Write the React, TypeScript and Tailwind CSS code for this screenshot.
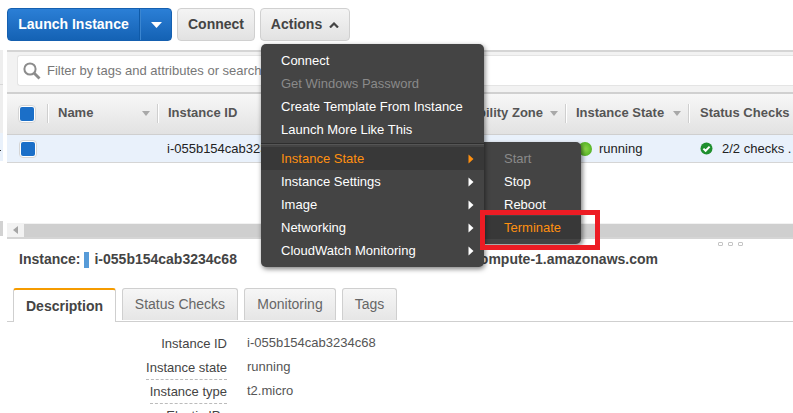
import React from "react";

const Caret = ({ className = "" }: { className?: string }) => (
  <svg width="8" height="5" viewBox="0 0 8 5" className={`shrink-0 ${className}`}><path d="M0 0h8L4 5z" fill="#a8a8a8" /></svg>
);

const Arrow = ({ color = "#fff" }: { color?: string }) => (
  <svg width="6" height="10" viewBox="0 0 6 10" className="shrink-0"><path d="M0.5 0.5L5.5 5L0.5 9.5z" fill={color} /></svg>
);

const Check = () => (
  <div className="flex h-[18px] w-[18px] items-center justify-center rounded-[4px] border border-[#d5d5d5] bg-white">
    <div className="h-[14px] w-[14px] rounded-[2px] bg-[#1b6fc8]" />
  </div>
);

const Sep = () => <div className="h-[19px] w-[2px] shrink-0 border-l border-[#cfcfcf] bg-white" />;

const HeadCol = ({ label, w, pad = "pl-[9px]", caret = true }: { label: string; w: string; pad?: string; caret?: boolean }) => (
  <div className={`flex shrink-0 items-center ${w}`}>
    <Sep />
    <div className={`flex flex-1 items-center justify-between pr-[7px] ${pad}`}>
      <span className="whitespace-nowrap">{label}</span>
      {caret && <Caret />}
    </div>
  </div>
);

const Item = ({ label, tone = "white", arrow, active, className = "" }: { label: string; tone?: "white" | "dim" | "orange"; arrow?: string; active?: boolean; className?: string }) => (
  <div className={`flex h-[23px] items-center justify-between pr-[10px] ${active ? "bg-[#383838]" : ""} ${tone === "white" ? "text-white" : tone === "dim" ? "text-[#8a8a8a]" : "text-[#ff9010]"} ${className}`}>
    <span className="whitespace-nowrap">{label}</span>
    {arrow && <Arrow color={arrow} />}
  </div>
);

const Tab = ({ label, w }: { label: string; w: string }) => (
  <div className={`mb-px flex h-[32px] items-center justify-center rounded-t-[3px] border border-b-0 border-[#cfcfcf] bg-gradient-to-b from-[#f6f6f6] to-[#e6e6e6] text-[#666] ${w}`}>
    {label}
  </div>
);

const Row = ({ label, value, dashed }: { label: string; value: string; dashed?: boolean }) => (
  <div className="flex h-[24px]">
    <div className="flex w-[220px] justify-end">
      <span className={`h-[22px] leading-[20px] text-[#444] ${dashed ? "border-b border-dashed border-[#bbb]" : ""}`}>{label}</span>
    </div>
    <span className="ml-[20px] leading-[18px] text-[#555]">{value}</span>
  </div>
);

export default function App() {
  return (
    <div className="relative flex h-[413px] w-[793px] overflow-hidden bg-white font-['Liberation_Sans',Arial,sans-serif] text-[13px] text-[#333]">
      {/* left sliver */}
      <div className="flex w-[7px] shrink-0 flex-col">
        <div className="h-[50px]" />
        <div className="h-[34px] w-[3px] bg-[#eeeeee]" />
        <div className="h-[49px] w-[3px] border-t border-[#d8d8d8] bg-[#eeeeee]" />
        <div className="relative h-[28px] w-[3px] bg-[#e9f1fb]">
          <span className="absolute left-0 top-[17px] h-px w-px bg-[#333]" />
        </div>
        <div className="h-[60px]" />
        <div className="h-[15px] w-[3px] bg-[#d2d2d2]" />
      </div>

      <div className="flex min-w-0 flex-1 flex-col">
        {/* toolbar */}
        <div className="flex h-[50px] shrink-0 gap-[5px] pt-[8px] text-[14px]">
          <div className="flex h-[33px] w-[165px] rounded-[4px] border border-[#1560b0] bg-gradient-to-b from-[#2b7fd6] to-[#1462b4] font-bold text-white">
            <div className="flex w-[131px] items-center justify-center">Launch Instance</div>
            <div className="w-[2px] border-l border-[#0f5aa8] bg-[#3a85d0]" />
            <div className="flex flex-1 items-center justify-center">
              <svg width="11" height="6" viewBox="0 0 11 6"><path d="M0 0h11L5.5 6z" fill="#fff" /></svg>
            </div>
          </div>
          <div className="flex h-[33px] w-[78px] items-center justify-center rounded-[4px] border border-[#d0d0d0] bg-gradient-to-b from-[#f4f4f4] to-[#e2e2e2] font-bold text-[#444]">Connect</div>
          <div className="flex h-[33px] w-[90px] items-center justify-center gap-[7px] rounded-[4px] border border-[#d0d0d0] bg-gradient-to-b from-[#f4f4f4] to-[#e2e2e2] font-bold text-[#444]">
            Actions
            <svg width="10" height="6" viewBox="0 0 10 6"><path d="M1 5.5L5 1.5L9 5.5" fill="none" stroke="#444" strokeWidth="2.2" /></svg>
          </div>
        </div>

        {/* filter */}
        <div className="flex h-[42px] shrink-0 items-start border-t-2 border-[#d5d5d5] bg-[#f2f2f2] pl-[10px] pt-[3px]">
          <div className="flex h-[31px] flex-1 items-center gap-[6px] rounded-l-[3px] border-y border-l border-[#e4e4e4] bg-white pl-[5px] text-[#777]">
            <svg width="18" height="18" viewBox="0 0 18 18" fill="none"><circle cx="7" cy="7" r="5.6" stroke="#8c8c8c" strokeWidth="2" /><path d="M11 11l5.5 5.5" stroke="#8c8c8c" strokeWidth="2.8" /></svg>
            <span>Filter by tags and attributes or search by keyword</span>
          </div>
        </div>

        {/* table header */}
        <div className="flex h-[43px] shrink-0 items-center border-y border-t-2 border-t-[#d0d0d0] border-b-[#cfcfcf] bg-gradient-to-b from-[#f7f7f7] to-[#e2e2e2] pb-[2px] font-bold text-[#555]">
          <div className="flex w-[40px] shrink-0 justify-center pl-[1px] pr-[2px] pt-[2px]"><Check /></div>
          <HeadCol label="Name" w="w-[110px]" />
          <HeadCol label="Instance ID" w="w-[240px]" />
          <div className="flex-1" />
          <div className="flex w-[168px] shrink-0 items-center justify-end pr-[7px]">
            <span className="whitespace-nowrap">Availability Zone</span><Caret className="ml-[7px]" />
          </div>
          <HeadCol label="Instance State" w="w-[123px]" pad="pl-[9px]" />
          <HeadCol label="Status Checks" w="w-[105px]" pad="pl-[10px]" caret={false} />
        </div>

        {/* selected row */}
        <div className="flex h-[28px] shrink-0 items-center border-b border-[#d5d5d5] bg-[#e9f1fb] text-[#222]">
          <div className="flex w-[40px] shrink-0 justify-center pl-[2px] pr-[1px]"><Check /></div>
          <div className="w-[120px] shrink-0" />
          <span className="w-[411px] shrink-0 whitespace-nowrap">i-055b154cab3234c68</span>
          <span className="h-[14px] w-[14px] shrink-0 rounded-full bg-radial from-[#8fdc4a] to-[#3da512]" />
          <span className="ml-[7px] w-[101px] shrink-0">running</span>
          <svg width="13" height="13" viewBox="0 0 13 13" className="shrink-0"><circle cx="6.5" cy="6.5" r="6" fill="#1f8f2e" /><path d="M3.4 6.6l2.2 2.2 4-4.2" fill="none" stroke="#fff" strokeWidth="2" /></svg>
          <span className="ml-[9px] whitespace-nowrap">2/2 checks .</span>
        </div>

        <div className="h-[60px] shrink-0" />

        {/* scrollbar */}
        <div className="flex h-[16px] shrink-0 items-center border-b-2 border-[#d5d5d5] bg-[#f2f2f2]">
          <svg width="17" height="8" viewBox="0 0 17 8"><path d="M11 0v8L6 4z" fill="#a5a5a5" /></svg>
          <div className="h-[13px] flex-1 bg-[#cfcfcf]" />
        </div>

        {/* details */}
        <div className="relative flex h-[44px] shrink-0 items-center pb-[3px] pl-[12px] text-[14px] font-bold text-[#444]">
          Instance:
          <span className="ml-[4px] h-[16px] w-[5px] bg-[#579bd8]" />
          <span className="ml-[5px]">i-055b154cab3234c68</span>
          <span className="absolute left-[388px] top-[10px] whitespace-nowrap">ec2-0-0-0-0.compute-1.amazonaws.com</span>
        </div>

        <div className="flex h-[39px] shrink-0 items-end gap-[6px] border-b border-[#cfcfcf] pl-[6px] text-[14px]">
          <div className="-mb-px flex h-[34px] w-[103px] items-center justify-center rounded-t-[3px] border border-t-2 border-b-0 border-[#cfcfcf] border-t-[#f59b00] bg-white font-bold text-[#444]">Description</div>
          <Tab label="Status Checks" w="w-[116px]" />
          <Tab label="Monitoring" w="w-[92px]" />
          <Tab label="Tags" w="w-[55px]" />
        </div>

        <div className="flex flex-col pt-[12px]">
          <Row label="Instance ID" value="i-055b154cab3234c68" />
          <Row label="Instance state" value="running" dashed />
          <Row label="Instance type" value="t2.micro" dashed />
          <Row label="Elastic IPs" value="" />
        </div>
      </div>

      {/* Submenu */}
      <div className="absolute left-[483px] top-[142px] flex h-[102px] w-[98px] flex-col rounded-r-[5px] bg-[#444444] pt-[5px] shadow-[2px_2px_4px_rgba(0,0,0,0.45)]">
        <Item label="Start" tone="dim" className="pl-[21px]" />
        <Item label="Stop" className="pl-[21px]" />
        <Item label="Reboot" className="pl-[21px]" />
        <Item label="Terminate" tone="orange" active className="pl-[21px]" />
      </div>

      {/* Main menu */}
      <div className="absolute left-[261px] top-[44px] flex h-[223px] w-[223px] flex-col rounded-[5px] bg-[#444444] pt-[5px] shadow-[1px_2px_5px_rgba(0,0,0,0.5)]">
        <Item label="Connect" className="pl-[20px]" />
        <Item label="Get Windows Password" tone="dim" className="pl-[20px]" />
        <Item label="Create Template From Instance" className="pl-[20px]" />
        <Item label="Launch More Like This" className="pl-[20px]" />
        <div className="mb-[2px] mt-[2px] h-[2px] border-b border-[#555] bg-[#2e2e2e]" />
        <Item label="Instance State" tone="orange" arrow="#ff9010" active className="pl-[20px]" />
        <Item label="Instance Settings" arrow="#fff" className="pl-[20px]" />
        <Item label="Image" arrow="#fff" className="pl-[20px]" />
        <Item label="Networking" arrow="#fff" className="pl-[20px]" />
        <Item label="CloudWatch Monitoring" arrow="#fff" className="pl-[20px]" />
      </div>

      {/* red highlight */}
      <div className="absolute left-[480px] top-[210px] h-[40px] w-[120px] border-[5px] border-[#ed1c24]" />
      {/* splitter dots */}
      <div className="absolute left-[718px] top-[242px] flex gap-[5px]">
        <span className="h-[4px] w-[5px] rounded-[1px] border border-[#c4c4c4]" />
        <span className="h-[4px] w-[5px] rounded-[1px] border border-[#c4c4c4]" />
        <span className="h-[4px] w-[5px] rounded-[1px] border border-[#c4c4c4]" />
      </div>
    </div>
  );
}
